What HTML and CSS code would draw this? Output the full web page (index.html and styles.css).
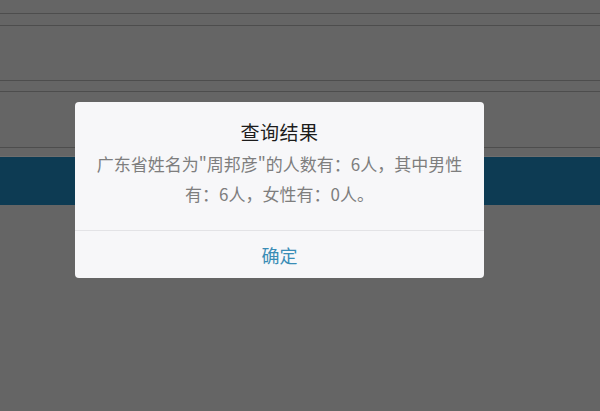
FILE: index.html
```html
<!DOCTYPE html>
<html lang="zh-CN">
<head>
<meta charset="utf-8">
<title>查询结果</title>
<link rel="stylesheet" href="styles.css">
</head>
<body>
<div class="page">
  <div class="row r1"></div>
  <div class="row r2"></div>
  <div class="row r3"></div>
  <div class="row r4"></div>
  <div class="row r5"></div>
  <div class="spacer"></div>
  <div class="band"></div>
</div>
<div class="dialog">
  <div class="dialog-body">
    <h2 class="dialog-title">查询结果</h2>
    <p class="dialog-msg">广东省姓名为"周邦彦"的人数有：6人，其中男性有：6人，女性有：0人。</p>
  </div>
  <div class="dialog-foot">确定</div>
</div>
</body>
</html>
```

FILE: styles.css
```css
html, body {
  margin: 0;
  padding: 0;
}
body {
  width: 600px;
  height: 411px;
  overflow: hidden;
  background: #656565;
  font-family: "Noto Sans CJK SC", "Noto Sans", sans-serif;
  position: relative;
}
.page {
  display: flex;
  flex-direction: column;
}
.row {
  border-bottom: 1px solid #4d4d4d;
}
.r1 { height: 13px; }
.r2 { height: 11px; }
.r3 { height: 54px; }
.r4 { height: 10px; }
.r5 { height: 55px; }
.spacer {
  height: 8px;
  border-bottom: 1px solid #6e6e6e;
}
.band {
  height: 48px;
  background: #0d3b53;
}
.dialog {
  position: absolute;
  left: 75px;
  top: 102px;
  width: 409px;
  height: 176px;
  background: #f7f7f9;
  border-radius: 4px;
  display: flex;
  flex-direction: column;
}
.dialog-body {
  padding: 18px 20px 21px;
  text-align: center;
  border-bottom: 1px solid #e3e3e6;
}
.dialog-title {
  margin: 0;
  font-size: 19px;
  line-height: 24px;
  font-weight: normal;
  color: #1c1c1c;
  letter-spacing: 0.5px;
}
.dialog-msg {
  margin: 5px 0 0;
  font-size: 17px;
  line-height: 30px;
  color: #7e7e7e;
}
.dialog-foot {
  flex: 1;
  display: flex;
  align-items: center;
  justify-content: center;
  font-size: 18px;
  color: #3a8db6;
}
```
